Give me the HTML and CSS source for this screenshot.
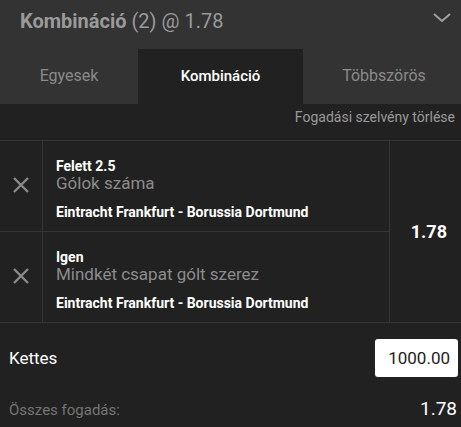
FILE: index.html
```html
<!DOCTYPE html>
<html lang="hu">
<head>
<meta charset="utf-8">
<title>Kombináció</title>
<link rel="stylesheet" href="styles.css">
</head>
<body>
<div class="slip">
  <div class="header">
    <div class="title"><b>Kombináció</b> (2) @ 1.78</div>
    <svg class="chevron" width="18" height="10" viewBox="0 0 18 10"><polyline points="1,1 9,8 17,1" fill="none" stroke="#a0a0a0" stroke-width="2"/></svg>
  </div>
  <div class="tabs">
    <div class="tab">Egyesek</div>
    <div class="tab active">Kombináció</div>
    <div class="tab">Többszörös</div>
  </div>
  <div class="clear-row"><span class="clear">Fogadási szelvény törlése</span></div>
  <div class="bets">
    <div class="legs">
      <div class="leg">
        <div class="remove"><svg width="16" height="16" viewBox="0 0 16 16"><path d="M1 1L15 15M15 1L1 15" stroke="#8a8a8a" stroke-width="2.4" fill="none"/></svg></div>
        <div class="leg-info">
          <div class="pick">Felett 2.5</div>
          <div class="market">Gólok száma</div>
          <div class="event">Eintracht Frankfurt - Borussia Dortmund</div>
        </div>
      </div>
      <div class="leg">
        <div class="remove"><svg width="16" height="16" viewBox="0 0 16 16"><path d="M1 1L15 15M15 1L1 15" stroke="#8a8a8a" stroke-width="2.4" fill="none"/></svg></div>
        <div class="leg-info">
          <div class="pick">Igen</div>
          <div class="market">Mindkét csapat gólt szerez</div>
          <div class="event">Eintracht Frankfurt - Borussia Dortmund</div>
        </div>
      </div>
    </div>
    <div class="odds">1.78</div>
  </div>
  <div class="stake-row">
    <span class="stake-label">Kettes</span>
    <div class="stake-input">1000.00</div>
  </div>
  <div class="total-row">
    <span class="total-label">Összes fogadás:</span>
    <span class="total-value">1.78</span>
  </div>
</div>
</body>
</html>
```
FILE: styles.css
```css
html, body {
  margin: 0;
  padding: 0;
  background: #212121;
}
body {
  font-family: Roboto, "Noto Sans", sans-serif;
  color: #fff;
}
.slip {
  width: 461px;
}
.header {
  height: 49px;
  background: #333333;
  display: flex;
  align-items: center;
  justify-content: space-between;
  padding: 0 10px 0 20px;
  box-sizing: border-box;
}
.title {
  font-size: 20px;
  color: #9a9a9a;
  margin-top: -8px;
}
.title b {
  font-weight: 700;
}
.chevron {
  margin-top: -14px;
}
.tabs {
  display: grid;
  grid-template-columns: 138px 165px 1fr;
  height: 55px;
  background: #333333;
}
.tab {
  display: flex;
  align-items: center;
  justify-content: center;
  font-size: 16px;
  color: #8a8a8a;
  padding-bottom: 2px;
}
.tab:last-child {
  padding-left: 4px;
}
.tab.active {
  background: #212121;
  color: #fff;
  font-weight: 500;
  font-size: 15px;
}
.clear-row {
  height: 37px;
  border-bottom: 1px solid #363636;
  display: flex;
  justify-content: flex-end;
  padding: 5px 6px 0 0;
  box-sizing: border-box;
}
.clear {
  font-size: 14px;
  color: #9a9a9a;
}
.bets {
  display: flex;
  border-bottom: 1px solid #363636;
}
.legs {
  width: 389px;
  border-right: 1px solid #363636;
}
.leg {
  display: grid;
  grid-template-columns: 43px 1fr;
  height: 90px;
  border-bottom: 1px solid #363636;
}
.leg:last-child {
  border-bottom: none;
  height: 90px;
}
.remove {
  border-right: 1px solid #363636;
  display: flex;
  align-items: center;
  justify-content: center;
  padding-bottom: 3px;
}
.leg-info {
  padding: 17px 0 0 13px;
}
.pick {
  font-size: 14px;
  font-weight: 700;
  line-height: 16px;
}
.market {
  font-size: 17px;
  line-height: 18px;
  color: #8c8c8c;
}
.event {
  font-size: 14px;
  font-weight: 700;
  line-height: 16px;
  margin-top: 12px;
}
.odds {
  flex: 1;
  display: flex;
  align-items: center;
  justify-content: flex-end;
  padding-right: 14px;
  font-size: 18px;
  font-weight: 700;
}
.stake-row {
  display: flex;
  align-items: center;
  justify-content: space-between;
  padding: 16px 3px 0 9px;
}
.stake-label {
  font-size: 17px;
  color: #fff;
}
.stake-input {
  width: 83px;
  height: 38px;
  box-sizing: border-box;
  background: #fff;
  border-radius: 3px;
  color: #222;
  font-size: 17px;
  display: flex;
  align-items: center;
  justify-content: flex-end;
  padding-right: 8px;
}
.total-row {
  display: flex;
  align-items: baseline;
  justify-content: space-between;
  padding: 20px 4px 0 9px;
}
.total-label {
  font-size: 15px;
  color: #757575;
}
.total-value {
  font-size: 19px;
  color: #fff;
}
```
